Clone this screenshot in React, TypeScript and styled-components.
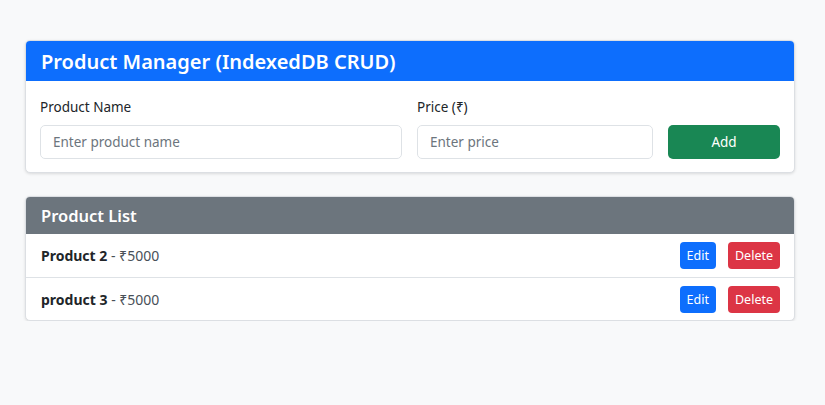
import React, { useState } from 'react';
import styled, { createGlobalStyle } from 'styled-components';

const GlobalStyle = createGlobalStyle`
  * { box-sizing: border-box; }
  body {
    margin: 0;
    background: #f8f9fa;
    font-family: "Noto Sans", "Open Sans", sans-serif;
    color: #212529;
    font-size: 14px;
  }
`;

const Page = styled.div`
  padding: 40px 30px 0 25px;
  display: flex;
  flex-direction: column;
  gap: 23px;
`;

const Card = styled.div`
  background: #fff;
  border: 1px solid #dcdfe3;
  border-radius: 5px;
  box-shadow: 0 1px 3px rgba(0, 0, 0, 0.12);
  overflow: hidden;
`;

const CardHeader = styled.div<{ $tone: 'primary' | 'secondary' }>`
  background: ${(p) => (p.$tone === 'primary' ? '#0d6efd' : '#6c757d')};
  color: #fff;
  height: ${(p) => (p.$tone === 'primary' ? '40px' : '37px')};
  padding: 0 15px;
  display: flex;
  align-items: center;
`;

const Title = styled.h1<{ $size: number }>`
  margin: 0;
  font-size: ${(p) => p.$size}px;
  font-weight: 600;
  letter-spacing: 0;
`;

const FormBody = styled.div`
  padding: 17px 14px 13px 14px;
  display: grid;
  grid-template-columns: 362px 236px 1fr;
  column-gap: 15px;
  align-items: end;
`;

const Field = styled.div`
  display: flex;
  flex-direction: column;
  gap: 9px;
`;

const Label = styled.label`
  font-size: 13.5px;
  line-height: 18px;
  color: #212529;
`;

const Input = styled.input`
  height: 34px;
  border: 1px solid #dee2e6;
  border-radius: 5px;
  padding: 0 12px;
  font-family: inherit;
  font-size: 13.5px;
  color: #212529;
  outline: none;

  &::placeholder {
    color: #6c757d;
  }
`;

const Button = styled.button<{ $variant: 'success' | 'primary' | 'danger'; $small?: boolean }>`
  border: none;
  border-radius: ${(p) => (p.$small ? '4px' : '5px')};
  color: #fff;
  font-family: inherit;
  font-size: ${(p) => (p.$small ? '12.5px' : '13.5px')};
  height: ${(p) => (p.$small ? '27px' : '34px')};
  padding: ${(p) => (p.$small ? '0 7px' : '0 12px')};
  background: ${(p) =>
    p.$variant === 'success' ? '#198754' : p.$variant === 'primary' ? '#0d6efd' : '#dc3545'};
  cursor: pointer;
`;

const Row = styled.div`
  display: flex;
  align-items: center;
  justify-content: space-between;
  height: 43px;
  padding: 0 14px 0 15px;

  & + & {
    border-top: 1px solid #dee2e6;
  }
`;

const Name = styled.strong`
  font-weight: 700;
  color: #212529;
`;

const Price = styled.span`
  color: #495057;
`;

const Actions = styled.div`
  display: flex;
  gap: 12px;
`;

type Product = { id: number; name: string; price: number };

const App = () => {
  const [name, setName] = useState('');
  const [price, setPrice] = useState('');
  const [products, setProducts] = useState<Product[]>([
    { id: 2, name: 'Product 2', price: 5000 },
    { id: 3, name: 'product 3', price: 5000 },
  ]);

  const add = () => {
    if (!name || !price) return;
    setProducts([...products, { id: Date.now(), name, price: Number(price) }]);
    setName('');
    setPrice('');
  };

  return (
    <>
      <GlobalStyle />
      <Page>
        <Card>
          <CardHeader $tone="primary">
            <Title $size={20}>Product Manager (IndexedDB CRUD)</Title>
          </CardHeader>
          <FormBody>
            <Field>
              <Label>Product Name</Label>
              <Input
                placeholder="Enter product name"
                value={name}
                onChange={(e) => setName(e.target.value)}
              />
            </Field>
            <Field>
              <Label>Price (₹)</Label>
              <Input
                placeholder="Enter price"
                value={price}
                onChange={(e) => setPrice(e.target.value)}
              />
            </Field>
            <Button $variant="success" onClick={add}>
              Add
            </Button>
          </FormBody>
        </Card>

        <Card>
          <CardHeader $tone="secondary">
            <Title $size={16.5}>Product List</Title>
          </CardHeader>
          {products.map((p) => (
            <Row key={p.id}>
              <span>
                <Name>{p.name}</Name> <Price>- ₹{p.price}</Price>
              </span>
              <Actions>
                <Button $variant="primary" $small>
                  Edit
                </Button>
                <Button
                  $variant="danger"
                  $small
                  onClick={() => setProducts(products.filter((x) => x.id !== p.id))}
                >
                  Delete
                </Button>
              </Actions>
            </Row>
          ))}
        </Card>
      </Page>
    </>
  );
};

export default App;
